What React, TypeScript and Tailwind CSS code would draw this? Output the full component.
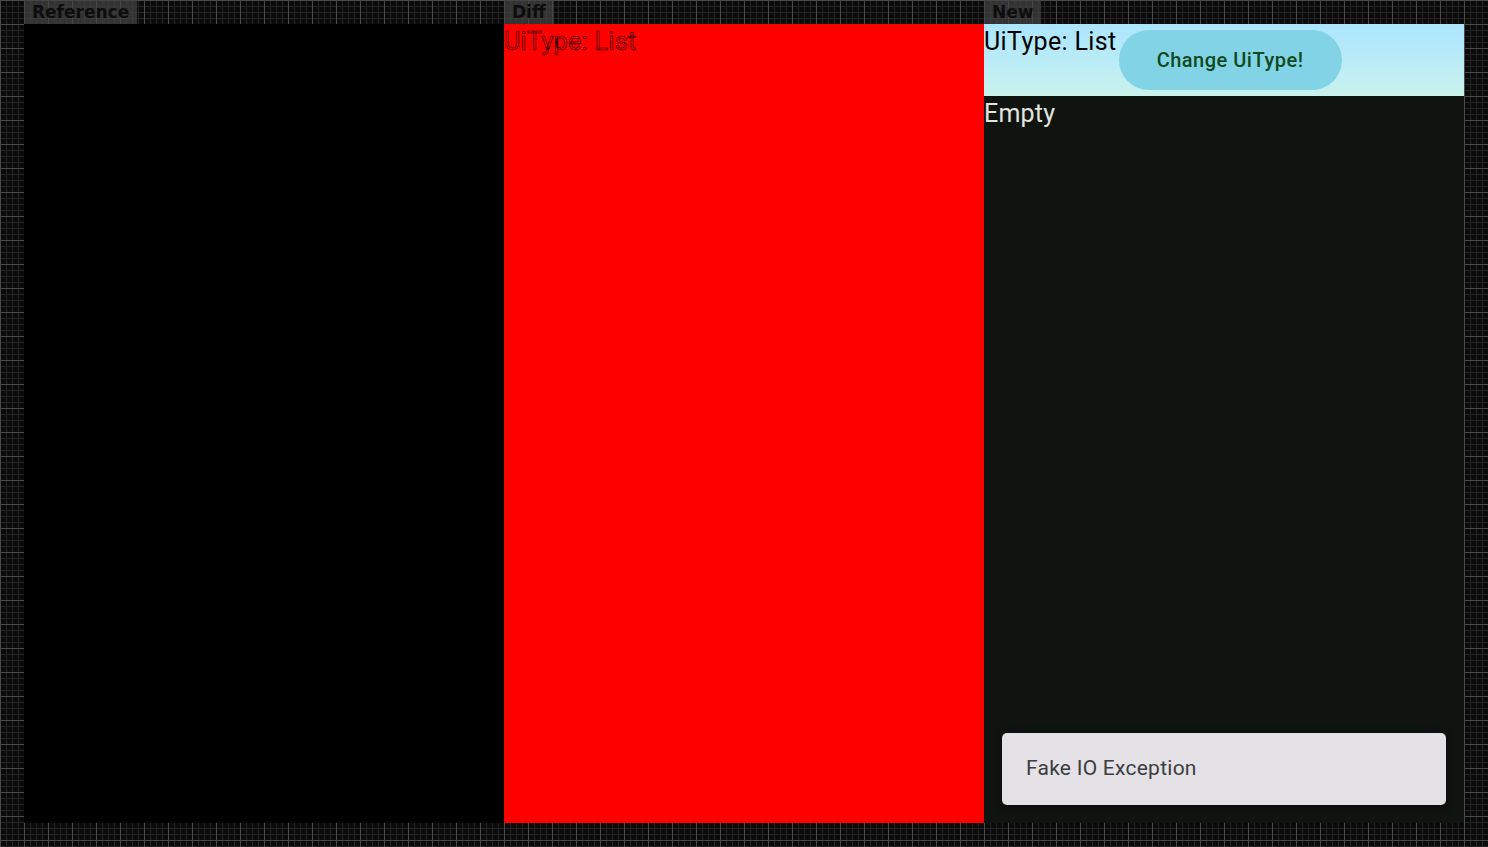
const gridBg =
  'bg-[#0b0b0b] bg-[image:linear-gradient(to_right,#4a4a4a_1px,transparent_1px),linear-gradient(to_bottom,#4a4a4a_1px,transparent_1px),linear-gradient(to_right,#262626_1px,transparent_1px),linear-gradient(to_bottom,#262626_1px,transparent_1px)] bg-[size:24px_24px,24px_24px,6px_6px,6px_6px]';

function Label({ text }: { text: string }) {
  return (
    <div className="w-[480px] h-6">
      <span className="inline-block h-6 px-[8px] bg-[#454545]/70 font-['DejaVu_Sans',sans-serif] font-bold text-[17px] leading-6 text-[#0d0d0d]">
        {text}
      </span>
    </div>
  );
}

function NewScreen() {
  return (
    <div className="w-[480px] h-full flex flex-col bg-[#101411] font-['Roboto',sans-serif]">
      {/* Top bar */}
      <div className="h-[72px] flex items-start bg-gradient-to-b from-[#abe5ff] to-[#c9f2ec]">
        <span className="text-[25px] leading-[36px] tracking-[0.35px] text-black">UiType: List</span>
        <button className="ml-[2px] mt-[6px] w-[223px] h-[60px] rounded-full bg-[#83d3e6] text-[#0e4a1d] font-medium text-[20px] tracking-[0.5px]">
          Change UiType!
        </button>
      </div>
      <span className="text-[25px] leading-[36px] tracking-[0.2px] text-[#e2e4df]">Empty</span>

      {/* Snackbar */}
      <div className="mt-auto mx-[18px] mb-[18px] h-[72px] rounded-[5px] bg-[#e4e2e6] shadow-[0_2px_8px_rgba(0,0,0,0.45)] flex items-center px-6">
        <span className="text-[21px] tracking-[0.25px] text-[#3b3d3f]">Fake IO Exception</span>
      </div>
    </div>
  );
}

export default function App() {
  return (
    <div className={`w-[1488px] h-[847px] overflow-hidden ${gridBg}`}>
      <div className="flex pl-6">
        <Label text="Reference" />
        <Label text="Diff" />
        <Label text="New" />
      </div>
      <div className="flex pl-6 h-[799px]">
        <div className="w-[480px] h-full bg-black" />
        <div className="w-[480px] h-full bg-[#ff0000] font-['Roboto',sans-serif]">
          <span className="text-[25px] leading-[36px] tracking-[0.35px] text-transparent [-webkit-text-stroke:0.6px_#000]">
            UiType: List
          </span>
        </div>
        <NewScreen />
      </div>
    </div>
  );
}
